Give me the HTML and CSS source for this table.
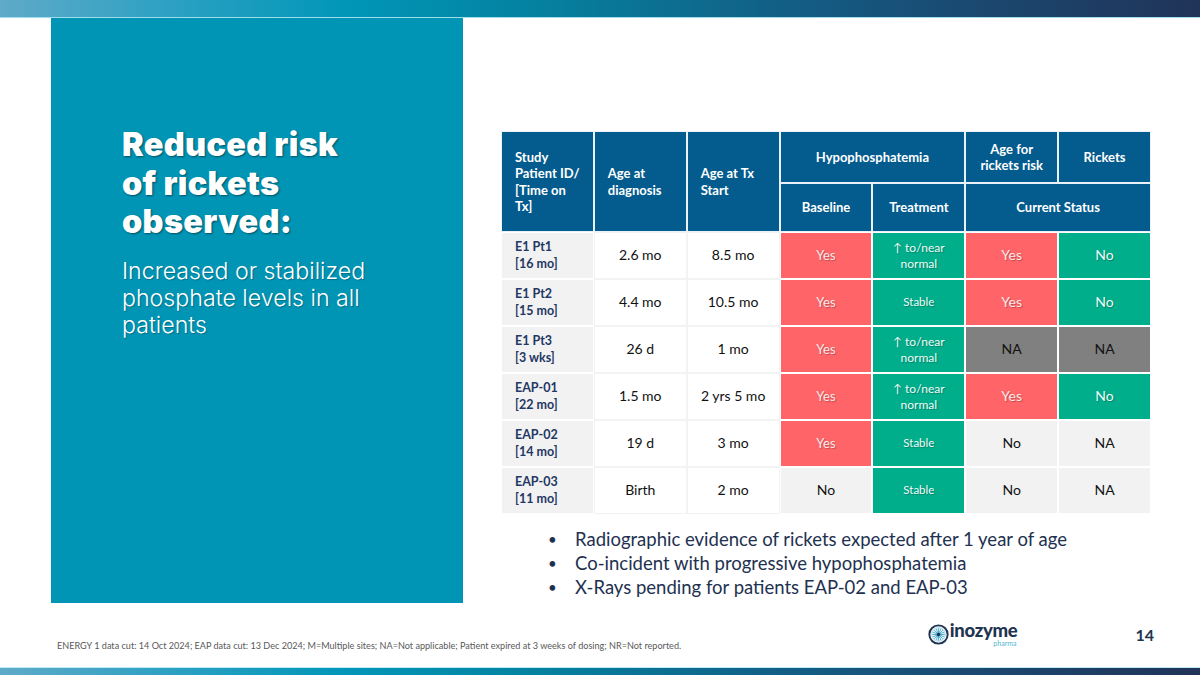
FILE: index.html
```html
<!DOCTYPE html>
<html lang="en">
<head>
<meta charset="utf-8">
<title>Reduced risk of rickets observed</title>
<link rel="stylesheet" href="styles.css">
</head>
<body>
<div class="slide">
  <div class="topbar"></div>
  <div class="main">
    <section class="panel">
      <h1 class="title">Reduced risk<br>of rickets<br>observed:</h1>
      <p class="sub">Increased or stabilized<br>phosphate levels in all<br>patients</p>
    </section>
    <section class="content">
      <table class="data">
        <colgroup>
          <col class="c"><col class="c"><col class="c"><col class="c"><col class="c"><col class="c"><col class="c">
        </colgroup>
        <thead>
          <tr class="hr1">
            <th rowspan="2" class="left">Study<br>Patient ID/<br>[Time on<br>Tx]</th>
            <th rowspan="2" class="left">Age at<br>diagnosis</th>
            <th rowspan="2" class="left">Age at Tx<br>Start</th>
            <th colspan="2">Hypophosphatemia</th>
            <th>Age for<br>rickets risk</th>
            <th>Rickets</th>
          </tr>
          <tr class="hr2">
            <th>Baseline</th>
            <th>Treatment</th>
            <th colspan="2">Current Status</th>
          </tr>
        </thead>
        <tbody>
          <tr>
            <td class="id">E1 Pt1<br>[16 mo]</td>
            <td class="w">2.6 mo</td>
            <td class="w">8.5 mo</td>
            <td class="red">Yes</td>
            <td class="green sm">↑ to/near<br>normal</td>
            <td class="red big">Yes</td>
            <td class="green big">No</td>
          </tr>
          <tr>
            <td class="id">E1 Pt2<br>[15 mo]</td>
            <td class="w">4.4 mo</td>
            <td class="w">10.5 mo</td>
            <td class="red">Yes</td>
            <td class="green xs">Stable</td>
            <td class="red big">Yes</td>
            <td class="green big">No</td>
          </tr>
          <tr>
            <td class="id">E1 Pt3<br>[3 wks]</td>
            <td class="w">26 d</td>
            <td class="w">1 mo</td>
            <td class="red">Yes</td>
            <td class="green sm">↑ to/near<br>normal</td>
            <td class="grey">NA</td>
            <td class="grey">NA</td>
          </tr>
          <tr>
            <td class="id">EAP-01<br>[22 mo]</td>
            <td class="w">1.5 mo</td>
            <td class="w">2 yrs 5 mo</td>
            <td class="red">Yes</td>
            <td class="green sm">↑ to/near<br>normal</td>
            <td class="red big">Yes</td>
            <td class="green big">No</td>
          </tr>
          <tr>
            <td class="id">EAP-02<br>[14 mo]</td>
            <td class="w">19 d</td>
            <td class="w">3 mo</td>
            <td class="red">Yes</td>
            <td class="green xs">Stable</td>
            <td class="light">No</td>
            <td class="light">NA</td>
          </tr>
          <tr>
            <td class="id">EAP-03<br>[11 mo]</td>
            <td class="w">Birth</td>
            <td class="w">2 mo</td>
            <td class="light">No</td>
            <td class="green xs">Stable</td>
            <td class="light">No</td>
            <td class="light">NA</td>
          </tr>
        </tbody>
      </table>
      <ul class="bullets">
        <li>Radiographic evidence of rickets expected after 1 year of age</li>
        <li>Co-incident with progressive hypophosphatemia</li>
        <li>X-Rays pending for patients EAP-02 and EAP-03</li>
      </ul>
    </section>
  </div>
  <footer class="footer">
    <p class="note">ENERGY 1 data cut: 14 Oct 2024; EAP data cut: 13 Dec 2024; M=Multiple sites; NA=Not applicable; Patient expired at 3 weeks of dosing; NR=Not reported.</p>
    <div class="brand">
      <div class="logo">
        <svg class="mark" width="21" height="21" viewBox="0 0 22 22" aria-hidden="true">
          <circle cx="11" cy="11" r="9.6" fill="#eef6fa" stroke="#1f3450" stroke-width="2"/>
          <circle cx="11" cy="11" r="7" fill="none" stroke="#9fcfe2" stroke-width="0.8"/>
          <g stroke="#3aa6c8" stroke-width="0.9" stroke-linecap="round">
            <line x1="11" y1="5" x2="11" y2="17"/>
            <line x1="5" y1="11" x2="17" y2="11"/>
            <line x1="6.8" y1="6.8" x2="15.2" y2="15.2"/>
            <line x1="15.2" y1="6.8" x2="6.8" y2="15.2"/>
            <line x1="8.7" y1="5.5" x2="13.3" y2="16.5"/>
            <line x1="13.3" y1="5.5" x2="8.7" y2="16.5"/>
            <line x1="5.5" y1="8.7" x2="16.5" y2="13.3"/>
            <line x1="5.5" y1="13.3" x2="16.5" y2="8.7"/>
          </g>
          <circle cx="11" cy="11" r="1.8" fill="#1f3450"/>
        </svg>
        <div class="word">
          <span class="name">inozyme</span>
          <span class="pharma">pharma</span>
        </div>
      </div>
      <span class="page">14</span>
    </div>
  </footer>
  <div class="bottombar"></div>
</div>
</body>
</html>
```

FILE: styles.css
```css
* { box-sizing: border-box; }
html, body { margin: 0; padding: 0; }
body {
  width: 1200px;
  height: 675px;
  overflow: hidden;
  background: #ffffff;
  font-family: Lato, "Liberation Sans", sans-serif;
}
.slide {
  display: flex;
  flex-direction: column;
  width: 1200px;
  height: 675px;
}
.topbar {
  height: 18px;
  flex: none;
  background: linear-gradient(90deg, #5faac8 0%, #2aa0c2 15%, #0096b8 29%, #05819f 45%, #125f86 65%, #1a4a72 80%, #213358 100%);
  border-bottom: 1px solid #9fdcec;
}
.main {
  display: flex;
  height: 585px;
  flex: none;
  padding-left: 51px;
}
.panel {
  width: 412px;
  flex: none;
  background: #0094b5;
  padding: 108px 0 0 71px;
  color: #ffffff;
}
.title {
  margin: 0;
  font-family: Inter, "Open Sans", sans-serif;
  font-weight: 900;
  font-size: 32.5px;
  line-height: 38.5px;
  letter-spacing: 0.3px;
  text-shadow: 1px 1px 2px rgba(0, 0, 0, 0.45);
}
.sub {
  margin: 16px 0 0;
  font-family: Inter, sans-serif;
  font-weight: 300;
  font-size: 23.2px;
  line-height: 27px;
  text-shadow: 1px 1px 1px rgba(0, 0, 0, 0.25);
}
.content {
  margin-left: 38px;
  padding-top: 113px;
}
.data {
  width: 650px;
  table-layout: fixed;
  border-collapse: separate;
  border-spacing: 0;
}
.data col.c { width: 92.8px; }
.data th {
  background: #035b8e;
  color: #ffffff;
  font-weight: 700;
  font-size: 13px;
  line-height: 16.5px;
  border: 1px solid #e8f2f8;
  padding: 0 6px;
  text-align: center;
  vertical-align: middle;
}
.data th.left {
  text-align: left;
  padding-left: 13px;
}
.data .hr1 th { height: 52px; }
.data .hr2 th { height: 49px; }
.data td {
  height: 47px;
  border: 1px solid #ffffff;
  text-align: center;
  vertical-align: middle;
  font-size: 14px;
  line-height: 16.5px;
  padding: 0 4px;
  color: #111111;
}
.data td.id {
  background: #f2f2f2;
  color: #1f3864;
  font-weight: 700;
  font-size: 12.5px;
  text-align: left;
  padding-left: 13px;
}
.data td.w {
  background: #ffffff;
  border-color: #f3f3f3;
}
.data td.red {
  background: #ff6568;
  color: #fbe9e9;
  font-size: 13px;
  text-shadow: 1px 1px 1px rgba(0, 0, 0, 0.25);
}
.data td.green {
  background: #00ae8b;
  color: #f0fbf8;
  font-size: 13px;
  text-shadow: 1px 1px 1px rgba(0, 0, 0, 0.25);
}
.data td.big { font-size: 14px; }
.data td.sm { font-size: 12px; line-height: 15.5px; }
.data td.xs { font-size: 11.5px; }
.data td.grey {
  background: #808080;
  color: #111111;
}
.data td.light {
  background: #f2f2f2;
  color: #111111;
}
.bullets {
  list-style: none;
  margin: 13px 0 0;
  padding: 0 0 0 47px;
  color: #1e3150;
  font-size: 18.5px;
  line-height: 24px;
}
.bullets li {
  position: relative;
  padding-left: 27px;
}
.bullets li::before {
  content: "•";
  position: absolute;
  left: 0;
  top: 0;
  font-size: 15px;
}
.footer {
  height: 64px;
  flex: none;
  display: flex;
  justify-content: space-between;
  align-items: flex-end;
  padding: 0 46px 16px 57px;
}
.note {
  margin: 0;
  font-size: 9.1px;
  line-height: 11px;
  color: #595959;
}
.brand {
  display: flex;
  align-items: center;
  gap: 118px;
  margin-bottom: 4px;
}
.logo {
  display: flex;
  align-items: center;
  gap: 1px;
}
.mark { display: block; }
.word {
  display: flex;
  flex-direction: column;
  align-items: flex-end;
}
.name {
  font-family: Lato, sans-serif;
  font-weight: 900;
  font-size: 18.5px;
  line-height: 18px;
  color: #1f3450;
  letter-spacing: -0.3px;
}
.pharma {
  font-size: 7px;
  line-height: 8px;
  color: #4fb6d2;
  margin-right: 1px;
}
.page {
  font-weight: 700;
  font-size: 16px;
  color: #1f3450;
}
.bottombar {
  height: 8px;
  flex: none;
  background: linear-gradient(90deg, #5faac8 0%, #2aa0c2 15%, #0096b8 29%, #05819f 45%, #125f86 65%, #1a4a72 80%, #213358 100%);
  border-top: 1px solid #bfeaf3;
}
```
